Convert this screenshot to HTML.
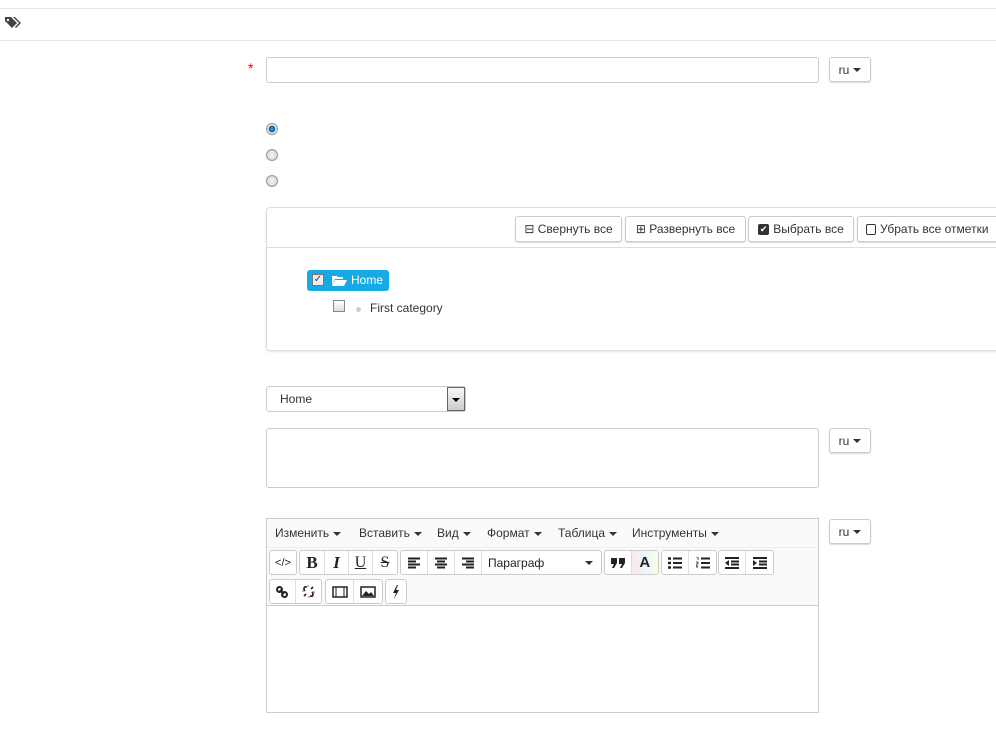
<!DOCTYPE html>
<html><head><meta charset="utf-8">
<style>
*{box-sizing:border-box;margin:0;padding:0}
body{width:996px;height:729px;background:#fff;font-family:"Liberation Sans","DejaVu Sans",sans-serif;font-size:12px;color:#333;position:relative;overflow:hidden}
.a{position:absolute}
.inp{border:1px solid #ccc;border-radius:3px;background:#fff}
.btn{border:1px solid #ccc;border-radius:3px;background:#fff;box-shadow:0 1px 1px rgba(0,0,0,.15);font-size:12px;color:#333;display:flex;align-items:center;justify-content:center;white-space:nowrap}
.car{display:inline-block;width:0;height:0;border-left:4px solid transparent;border-right:4px solid transparent;border-top:4px solid #333;margin-left:4px;vertical-align:middle}
.radio{width:12px;height:12px;border-radius:50%;border:1px solid #999;background:radial-gradient(#f4f4f4,#ccc)}
.tg{position:absolute;display:flex;border:1px solid #ccc;border-radius:3px;background:#fff;height:25px}
.tg div{border-right:1px solid #ddd;display:flex;align-items:center;justify-content:center;font-size:14px;color:#222;height:100%}
.tg div:last-child{border-right:none}
.m{position:absolute;top:526px;font-size:12px;color:#333;white-space:nowrap}
</style></head><body>
<div class="a" style="left:0;top:8px;width:996px;height:1px;background:#e3e3e3"></div>
<div class="a" style="left:0;top:40px;width:996px;height:1px;background:#e8e8e8"></div>
<svg class="a" style="left:5px;top:16px" width="16" height="14" viewBox="0 0 16 14"><path d="M0 1h6l6 6-5 5-7-7z" fill="#444"/><circle cx="3" cy="4" r="1.2" fill="#fff"/><path d="M8 1h2l6 6-5 5-1-1 4-4z" fill="#444"/></svg>

<div class="a" style="left:248px;top:60px;color:#f00;font-size:14px">*</div>
<div class="a inp" style="left:266px;top:57px;width:553px;height:26px"></div>
<div class="a btn" style="left:829px;top:57px;width:42px;height:25px">ru<span class="car"></span></div>

<div class="a radio" style="left:266px;top:123px;background:radial-gradient(#3aa0e0 0,#0a5f9e 45%,#eee 50%,#ccc 100%)"></div>
<div class="a radio" style="left:266px;top:149px"></div>
<div class="a radio" style="left:266px;top:175px"></div>

<div class="a" style="left:266px;top:207px;width:740px;height:144px;border:1px solid #ddd;border-radius:4px;box-shadow:0 1px 2px rgba(0,0,0,.1)"></div>
<div class="a" style="left:267px;top:247px;width:730px;height:1px;background:#ddd"></div>
<div class="a btn" style="left:515px;top:216px;width:107px;height:26px">⊟ Свернуть все</div>
<div class="a btn" style="left:625px;top:216px;width:121px;height:26px">⊞ Развернуть все</div>
<div class="a btn" style="left:748px;top:216px;width:106px;height:26px"><span style="display:inline-block;width:11px;height:11px;background:#333;border-radius:2px;color:#fff;font-size:9px;line-height:11px;text-align:center;margin-right:4px">✔</span>Выбрать все</div>
<div class="a btn" style="left:857px;top:216px;width:145px;height:26px;justify-content:flex-start;padding-left:8px"><span style="display:inline-block;width:10px;height:11px;border:1px solid #333;border-radius:2px;margin-right:4px"></span>Убрать все отметки</div>

<div class="a" style="left:307px;top:270px;width:82px;height:21px;background:#16a9e6;border-radius:3px"></div>
<div class="a" style="left:312px;top:274px;width:12px;height:12px;background:#eee;border:1px solid #777;font-size:10px;line-height:10px;text-align:center;color:#335">✓</div>
<svg class="a" style="left:332px;top:275px" width="15" height="11" viewBox="0 0 15 11"><path d="M0 1h5l1 1h5v2H3L0 10z M3 5h12l-3 6H0z" fill="#fff"/></svg>
<div class="a" style="left:351px;top:273px;color:#fff;font-size:12px">Home</div>
<div class="a" style="left:333px;top:300px;width:12px;height:12px;border:1px solid #888;background:linear-gradient(#fff,#ddd)"></div>
<div class="a" style="left:356px;top:307px;width:5px;height:5px;border-radius:50%;background:#ccc"></div>
<div class="a" style="left:370px;top:301px;font-size:12px">First category</div>

<div class="a inp" style="left:266px;top:386px;width:200px;height:26px"></div>
<div class="a" style="left:280px;top:392px">Home</div>
<div class="a" style="left:447px;top:387px;width:18px;height:24px;border:1px solid #666;background:linear-gradient(#f6f6f6,#ccc)"><span class="car" style="margin:9px 0 0 4px;border-top-color:#000"></span></div>

<div class="a inp" style="left:266px;top:428px;width:553px;height:60px"></div>
<div class="a btn" style="left:829px;top:428px;width:42px;height:25px">ru<span class="car"></span></div>

<div class="a" style="left:266px;top:518px;width:553px;height:195px;border:1px solid #ccc"></div>
<div class="a" style="left:267px;top:519px;width:551px;height:87px;background:#fafafa;border-bottom:1px solid #ccc"></div>
<div class="m" style="left:275px">Изменить<i class="car"></i></div>
<div class="m" style="left:359px">Вставить<i class="car"></i></div>
<div class="m" style="left:437px">Вид<i class="car"></i></div>
<div class="m" style="left:487px">Формат<i class="car"></i></div>
<div class="m" style="left:558px">Таблица<i class="car"></i></div>
<div class="m" style="left:632px">Инструменты<i class="car"></i></div>
<div class="a" style="left:267px;top:547px;width:551px;height:1px;background:#eee"></div>

<div class="tg" style="left:269px;top:550px;width:28px"><div style="width:26px;font-size:11px">&lt;/&gt;</div></div>
<div class="tg" style="left:299px;top:550px;width:99px"><div style="width:25px;font-family:'Liberation Serif',serif;font-weight:bold;font-size:17px">B</div><div style="width:24px;font-family:'Liberation Serif',serif;font-style:italic;font-weight:bold;font-size:17px">I</div><div style="width:24px;font-family:'Liberation Serif',serif;text-decoration:underline;font-size:16px">U</div><div style="width:24px;font-family:'Liberation Serif',serif;text-decoration:line-through;font-size:16px">S</div></div>
<div class="tg" style="left:400px;top:550px;width:202px">
<div style="width:27px"><svg width="14" height="12"><path d="M1 1.5h12M1 4.5h8M1 7.5h12M1 10.5h8" stroke="#222" stroke-width="2"/></svg></div>
<div style="width:27px"><svg width="14" height="12"><path d="M1 1.5h12M3 4.5h8M1 7.5h12M3 10.5h8" stroke="#222" stroke-width="2"/></svg></div>
<div style="width:27px"><svg width="14" height="12"><path d="M1 1.5h12M5 4.5h8M1 7.5h12M5 10.5h8" stroke="#222" stroke-width="2"/></svg></div>
<div style="flex:1;justify-content:space-between;padding:0 8px 0 6px;font-size:12px">Параграф<span class="car" style="margin:0"></span></div></div>
<div class="tg" style="left:604px;top:550px;width:55px">
<div style="width:27px"><svg width="14" height="10"><path d="M0 0h6v5l-3 5H1l2-4H0zM8 0h6v5l-3 5H9l2-4H8z" fill="#222"/></svg></div>
<div style="width:27px;font-weight:bold;font-size:15px;background:linear-gradient(90deg,#fde8e8,#e8f6ff,#fffbe0)">A</div></div>
<div class="tg" style="left:661px;top:550px;width:56px">
<div style="width:28px"><svg width="14" height="12"><path d="M0 1.5h3M0 6h3M0 10.5h3" stroke="#222" stroke-width="2.5"/><path d="M5 1.5h9M5 6h9M5 10.5h9" stroke="#222" stroke-width="2"/></svg></div>
<div style="width:28px"><svg width="14" height="12"><path d="M0 0h2v3M0 5h2v2H0v2h2M0 10h2" stroke="#222" stroke-width="0.8" fill="none"/><path d="M5 1.5h9M5 6h9M5 10.5h9" stroke="#222" stroke-width="2"/></svg></div></div>
<div class="tg" style="left:718px;top:550px;width:56px">
<div style="width:28px"><svg width="14" height="12"><path d="M0 1h14M6 4.5h8M6 7.5h8M0 11h14" stroke="#222" stroke-width="2"/><path d="M4 3v6L0 6z" fill="#222"/></svg></div>
<div style="width:28px"><svg width="14" height="12"><path d="M0 1h14M6 4.5h8M6 7.5h8M0 11h14" stroke="#222" stroke-width="2"/><path d="M0 3v6L4 6z" fill="#222"/></svg></div></div>

<div class="tg" style="left:269px;top:579px;width:53px">
<div style="width:26px"><svg width="12" height="12"><circle cx="3.5" cy="3.5" r="2.5" stroke="#222" stroke-width="2" fill="none"/><circle cx="8.5" cy="8.5" r="2.5" stroke="#222" stroke-width="2" fill="none"/><path d="M4 4l4 4" stroke="#222" stroke-width="2"/></svg></div>
<div style="width:26px"><svg width="13" height="13"><path d="M5 2C2 1 1 4 3 6M8 11c3 1 4-2 2-4M4 9l-2 2M9 4l2-2" stroke="#222" stroke-width="1.6" fill="none"/><path d="M6 0v2M0 6h2M11 7h2M7 11v2" stroke="#e63" stroke-width="1"/></svg></div></div>
<div class="tg" style="left:325px;top:579px;width:58px"><div style="width:29px"><svg width="16" height="12"><rect x="1" y="1" width="14" height="10" fill="none" stroke="#222" stroke-width="1.5"/><path d="M4 1v10M12 1v10" stroke="#222"/></svg></div><div style="width:29px"><svg width="16" height="12"><rect x="1" y="1" width="14" height="10" fill="none" stroke="#222" stroke-width="1.5"/><path d="M2 10l4-5 3 3 2-2 3 4z" fill="#222"/></svg></div></div>
<div class="tg" style="left:385px;top:579px;width:22px"><div style="width:20px"><svg width="8" height="14"><path d="M5 0L1 8h3l-2 6 5-9H4l2-5z" fill="#222"/></svg></div></div>

<div class="a btn" style="left:829px;top:519px;width:42px;height:25px">ru<span class="car"></span></div>
</body></html>
